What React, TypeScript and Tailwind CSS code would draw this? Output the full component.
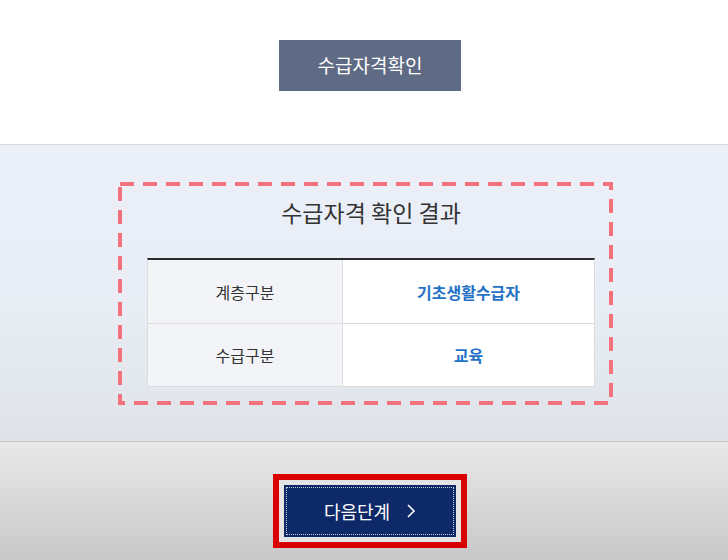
import React from 'react';

const rows = [
  { label: '계층구분', value: '기초생활수급자' },
  { label: '수급구분', value: '교육' },
];

export default function App() {
  return (
    <div
      className="flex h-[560px] w-[728px] flex-col overflow-hidden bg-white"
      style={{ fontFamily: '"Noto Sans CJK KR", "Noto Sans", sans-serif' }}
    >
      {/* top area */}
      <div className="flex h-[145px] shrink-0 justify-center border-b border-[#d6dae0] bg-white pl-[12px] pt-[40px]">
        <button className="h-[51px] w-[182px] bg-[#5f6a84] text-[19px] text-white">수급자격확인</button>
      </div>

      {/* result area */}
      <div className="flex h-[297px] shrink-0 justify-center border-b border-[#c4c6c9] bg-gradient-to-b from-[#ebf0f8] via-[#e9eef6] to-[#dfe3e9] pt-[37px]">
        <div className="relative ml-[3px] h-[223px] w-[495px] border-[4px] border-transparent pb-[14px] pl-[25px] pr-[14px] pt-[10px]">
          <svg className="pointer-events-none absolute -inset-[4px]" width="495" height="223">
            <rect x="2" y="2" width="491" height="219" fill="none" stroke="#f2737c" strokeWidth="4" strokeDasharray="14 9" />
          </svg>
          <h2 className="mb-[30px] text-center text-[23px] leading-[32px] text-[#333]">수급자격 확인 결과</h2>
          <div className="border-x border-b border-t-2 border-x-[#dcdcdc] border-b-[#dcdcdc] border-t-[#2b2b2b]">
            {rows.map((r, i) => (
              <div key={r.label} className={`flex h-[63px] ${i > 0 ? 'border-t border-[#dcdcdc]' : ''}`}>
                <div className="flex w-[195px] items-center justify-center border-r border-[#dcdcdc] bg-[#f3f4f7] text-[16px] text-[#333]">
                  {r.label}
                </div>
                <div className="flex flex-1 items-center justify-center bg-white text-[16px] font-bold text-[#2472c8]">
                  {r.value}
                </div>
              </div>
            ))}
          </div>
        </div>
      </div>

      {/* bottom area */}
      <div className="flex flex-1 justify-center bg-gradient-to-b from-[#e9e9e9] to-[#c8c8c8] pl-[12px] pt-[32px]">
        <div className="h-[74px] w-[194px] border-[6px] border-[#d80000] bg-[#e4e4e4] p-[5px]">
          <div className="h-full w-full bg-[#0d2967] p-[2px]">
            <div className="flex h-full w-full items-center justify-center gap-[16px] border border-dotted border-[#c8cde0] text-[18px] text-white">
              <span>다음단계</span>
              <svg width="10" height="16" viewBox="0 0 10 16" fill="none">
                <path d="M2 2l6 6-6 6" stroke="white" strokeWidth="1.6" />
              </svg>
            </div>
          </div>
        </div>
      </div>
    </div>
  );
}
